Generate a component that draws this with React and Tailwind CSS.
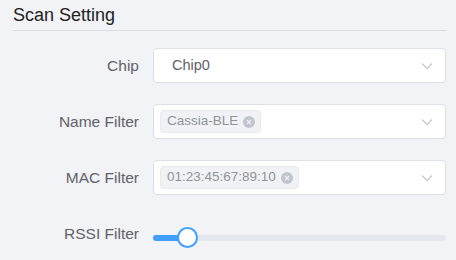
import React from 'react'

function Chevron() {
  return (
    <svg width="12" height="8" viewBox="0 0 12 8" fill="none" className="text-[#c0c4cc]">
      <path d="M1 1.5 L6 6.5 L11 1.5" stroke="currentColor" strokeWidth="1.1" />
    </svg>
  )
}

function Tag({ text }) {
  return (
    <span className="flex items-center h-[23px] pl-[6px] pr-[5px] bg-[#f0f2f5] border border-[#e9e9eb] rounded-[4px] text-[13.5px] text-[#909399]">
      {text}
      <span className="ml-[5px] w-[12px] h-[12px] rounded-full bg-[#c0c4cc] flex items-center justify-center">
        <svg width="6" height="6" viewBox="0 0 6 6">
          <path d="M1 1 L5 5 M5 1 L1 5" stroke="#f0f2f5" strokeWidth="1.1" />
        </svg>
      </span>
    </span>
  )
}

function Label({ children }) {
  return <div className="w-[127px] text-right text-[15.5px] text-[#606266] pr-[1px] whitespace-nowrap">{children}</div>
}

function Row({ label, children }) {
  return (
    <div className="flex items-center h-[35px] mb-[21px]">
      <Label>{label}</Label>
      <div className="ml-[13px] flex-1">{children}</div>
    </div>
  )
}

function SelectBox({ children }) {
  return (
    <div className="h-[35px] bg-white border border-[#dcdfe6] rounded-[4px] flex items-center pl-[6px] pr-[12px]">
      <div className="flex-1 flex items-center">{children}</div>
      <Chevron />
    </div>
  )
}

export default function App() {
  return (
    <div className="w-[456px] h-[260px] bg-[#f2f3f7] pl-[13px] pr-[10px] overflow-hidden" style={{ fontFamily: '"Liberation Sans", Arial, sans-serif' }}>
      <div className="h-[31px] border-b border-[#dadde3] text-[18px] text-[#222] leading-[20px] pt-[5px]">Scan Setting</div>
      <div className="mt-[17px]">
        <Row label="Chip">
          <SelectBox>
            <span className="pl-[12px] text-[14.5px] text-[#606266]">Chip0</span>
          </SelectBox>
        </Row>
        <Row label="Name Filter">
          <SelectBox>
            <Tag text="Cassia-BLE" />
          </SelectBox>
        </Row>
        <Row label="MAC Filter">
          <SelectBox>
            <Tag text="01:23:45:67:89:10" />
          </SelectBox>
        </Row>
        <div className="flex items-center h-[35px]">
          <Label>RSSI Filter</Label>
          <div className="ml-[13px] flex-1 relative h-[6px] mt-[8px] rounded-full bg-[#e4e7ed]">
            <div className="h-[6px] w-[34px] rounded-l-full bg-[#409eff]"></div>
            <div className="absolute left-[24px] top-[-8px] w-[21px] h-[21px] rounded-full bg-white border-2 border-[#409eff]"></div>
          </div>
        </div>
      </div>
    </div>
  )
}
